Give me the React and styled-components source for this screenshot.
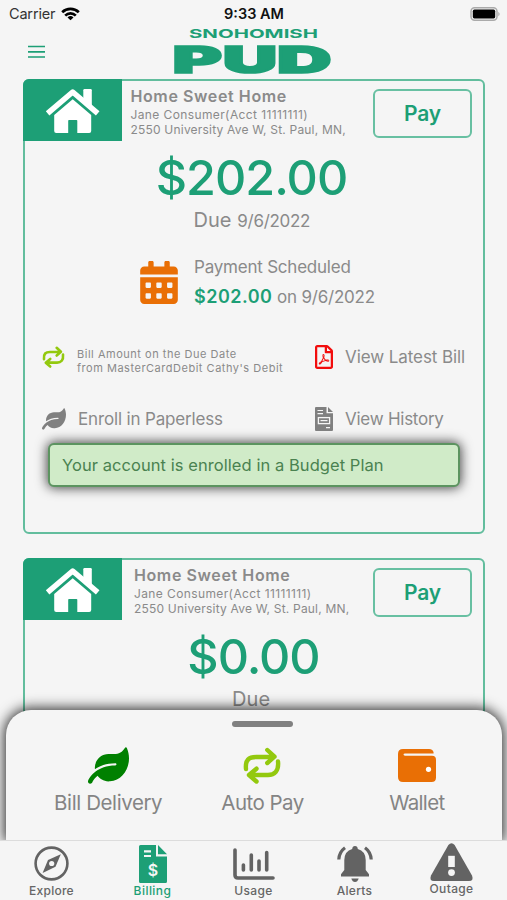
import React from 'react';
import styled, { createGlobalStyle } from 'styled-components';
import { FaCalendarAlt, FaLeaf, FaRegFilePdf } from 'react-icons/fa';

const green = '#1d9f76';
const line = '#62bd9d';
const gray = '#8a8a8a';
const bg = '#f5f5f5';

const GlobalStyle = createGlobalStyle`
  * { box-sizing: border-box; }
  body { margin: 0; background: ${bg}; font-family: Inter, "Liberation Sans", sans-serif; }
  button { font-family: inherit; }
  svg { display: block; flex: none; overflow: visible; }
`;

const Screen = styled.div`
  display: flex;
  flex-direction: column;
  width: 507px;
  height: 900px;
  overflow: hidden;
  background: ${bg};
`;

const Text = styled.span`
  display: block;
  white-space: pre;
  font-size: ${p => p.$size}px;
  font-weight: ${p => p.$weight || 400};
  letter-spacing: ${p => p.$track || 0}px;
  line-height: ${p => p.$line}px;
  color: ${p => p.$color || gray};
`;

const StatusBar = styled.div`
  display: grid;
  grid-template-columns: 1fr auto 1fr;
  align-items: center;
  height: 28px;
  padding: 0 8px 0 9px;
`;

const Carrier = styled.div`
  display: flex;
  align-items: center;
  gap: 6px;
`;

const BatterySlot = styled.div`
  display: flex;
  justify-content: flex-end;
  margin-right: -1px;
`;

const Header = styled.header`
  display: grid;
  grid-template-columns: 146px 157px 1fr;
  height: 51px;
  padding-left: 28px;
`;

const MenuButton = styled.button`
  padding: 17px 0 0;
  border: 0;
  background: none;
  display: flex;
  align-items: flex-start;
`;

const Content = styled.main`
  position: relative;
  height: 761px;
  overflow: hidden;
`;

const CardList = styled.div`
  display: flex;
  flex-direction: column;
  gap: 24px;
  padding: 0 22px 0 23px;
`;

const Card = styled.section`
  height: 455px;
  flex: none;
  border: 2px solid ${line};
  border-radius: 6px;
`;

const CardHead = styled.div`
  display: flex;
  height: 62px;
  margin: -2px -2px 0;
`;

const HouseTile = styled.div`
  width: 99px;
  padding: 10px 0 0 22px;
  background: ${green};
  border-radius: 6px 0 0 0;
`;

const Owner = styled.div`
  padding: 7px 0 0 ${p => p.$inset}px;
`;

const PayButton = styled.button`
  width: 99px;
  height: 49px;
  margin: 10px 13px 0 auto;
  padding: 0;
  display: flex;
  align-items: center;
  justify-content: center;
  background: none;
  border: 2px solid #68c0a2;
  border-radius: 6px;
`;

const Amount = styled.div`
  display: flex;
  justify-content: center;
  margin-top: 12px;
  padding-right: ${p => p.$shift || 0}px;
`;

const DueLine = styled.div`
  display: flex;
  justify-content: center;
  align-items: baseline;
  margin-top: 5px;
  height: 24px;
`;

const Scheduled = styled.div`
  display: flex;
  align-items: center;
  gap: 16px;
  height: 60px;
  margin: 20px 0 0 115px;
`;

const CalendarIcon = styled(FaCalendarAlt)`
  width: 38px;
  height: 43px;
  color: #e96f05;
`;

const PdfIcon = styled(FaRegFilePdf)`
  width: 18px;
  height: 24px;
  color: #f20d0d;
`;

const Inline = styled.div`
  display: flex;
  align-items: baseline;
`;

const Actions = styled.div`
  display: grid;
  grid-template-columns: 273px 1fr;
  grid-auto-rows: 34px;
  row-gap: 28px;
  margin: 28px 0 0 17px;
`;

const Action = styled.div`
  display: flex;
  align-items: center;
  gap: 12px;
`;

const TwoLines = styled.div`
  padding-top: 7px;
`;

const Banner = styled.div`
  display: flex;
  align-items: center;
  width: 412px;
  height: 44px;
  margin: 7px 0 0 23px;
  padding-left: 12px;
  background: #d0ebc8;
  border: 2px solid #5c9460;
  border-radius: 6px;
  box-shadow: 0 0 12px 1px rgba(0, 0, 0, 0.72);
`;

const Sheet = styled.div`
  position: absolute;
  left: 6px;
  right: 5px;
  bottom: 0;
  height: 130px;
  border-radius: 25px 25px 0 0;
  background: ${bg};
  box-shadow: 0 0 13px 2px rgba(0, 0, 0, 0.8);
`;

const Handle = styled.div`
  width: 61px;
  height: 6px;
  margin: 11px 0 0 226px;
  border-radius: 3px;
  background: #808080;
`;

const SheetItems = styled.div`
  display: grid;
  grid-template-columns: repeat(3, 1fr);
  padding: 16px 8px 0 25px;
`;

const SheetItem = styled.div`
  display: flex;
  flex-direction: column;
  align-items: center;
`;

const SheetIcon = styled.div`
  display: flex;
  align-items: center;
  justify-content: center;
  height: 45px;
`;

const TabBar = styled.nav`
  position: relative;
  display: grid;
  grid-template-columns: repeat(4, 101px) 93px;
  height: 60px;
  padding-left: 1px;
  border-top: 1px solid #dcdcdc;
  background: ${bg};
`;

const Tab = styled.div`
  display: flex;
  flex-direction: column;
  align-items: center;
`;

const TabIcon = styled.div`
  display: flex;
  align-items: flex-end;
  height: ${p => p.$height}px;
  margin-bottom: ${p => p.$gap}px;
`;

const Wifi = () => (
  <svg width="19" height="14" viewBox="0 0 19 14" fill="none" stroke="#000" strokeWidth="2.7">
    <path d="M1.2 5.2A12 12 0 0 1 17.8 5.2" />
    <path d="M4.2 8.6A7.6 7.6 0 0 1 14.8 8.6" />
    <path d="M9.5 13.3L6.5 10.4A4.3 4.3 0 0 1 12.5 10.4Z" fill="#000" stroke="none" />
  </svg>
);

const Battery = () => (
  <svg width="30" height="14" viewBox="0 0 30 14">
    <rect x="1" y="0.8" width="26" height="12.4" rx="3.6" fill="none" stroke="#aaa" strokeWidth="1.5" />
    <rect x="2.8" y="2.6" width="22.4" height="8.8" rx="1.6" />
    <path d="M28.3 4.7Q31 7 28.3 9.3Z" fill="#aaa" />
  </svg>
);

const Logo = () => (
  <svg width="157" height="48" viewBox="0 0 157 48" fill={green} fontFamily="Inter, sans-serif">
    <text x="15" y="10" fontSize="12.3" fontWeight="700" textLength="129" lengthAdjust="spacingAndGlyphs">SNOHOMISH</text>
    <g transform="translate(-1.5 45.2) scale(2.08 1)" fontSize="36.3" fontWeight="900" stroke={green} strokeWidth="1.7">
      <text x="0" y="0">P</text>
      <text x="24.2" y="0">U</text>
      <text x="50.2" y="0">D</text>
    </g>
  </svg>
);

const House = () => (
  <svg width="55" height="44" viewBox="0 0 55 44" fill="#fff">
    <path d="M38.3 1.2Q38.3 0 39.5 0H45.6Q46.8 0 46.8 1.2V18L38.3 11Z" />
    <path d="M2.6 24.3L27.7 3L52.7 24.3" fill="none" stroke="#fff" strokeWidth="5.5" strokeLinejoin="round" />
    <path d="M9.2 42V26L27.7 10.2L46.2 26V42Q46.2 44 44.2 44H32.3V31.8Q32.3 31 31.5 31H24Q23.2 31 23.2 31.8V44H11.2Q9.2 44 9.2 42Z" />
  </svg>
);

const Repeat = ({ width, height }) => (
  <svg width={width} height={height} viewBox="0 0 38 37" fill="none" stroke="#93c90e" strokeWidth="4.4" strokeLinecap="round" strokeLinejoin="round">
    <path d="M3 22C2 13 6 10 13 10H30M24.3 3L31.5 9.7L24.3 16" />
    <path d="M35 14.5C36 24 31.5 28 25 28H7M13.5 21.7L6 28L13.5 34.5" />
  </svg>
);

const HistoryFile = () => (
  <svg width="18" height="24" viewBox="0 0 18 24">
    <path d="M1 0H11.5V6.2H18V23Q18 24 17 24H1Q0 24 0 23V1Q0 0 1 0ZM13 0L18 5H13Z" fill="#808080" />
    <path d="M2.5 3.5H8M2.5 6.7H8M11 20.7H15" stroke={bg} strokeWidth="1.2" />
    <rect x="3.4" y="10.6" width="11.2" height="6" fill="#808080" stroke={bg} strokeWidth="1.3" />
    <path d="M5.5 13.6H12.5" stroke={bg} strokeWidth="1.2" />
  </svg>
);

const Wallet = () => (
  <svg width="38" height="33" viewBox="0 0 38 33">
    <path d="M5 0H31Q35 0 35.6 3.5V4.6H7Q5.5 4.6 5.5 5.6T7 6.8H34Q38 6.8 38 11V28.5Q38 33 33.5 33H5Q0 33 0 28V5Q0 0 5 0Z" fill="#e96f05" />
    <circle cx="30.5" cy="20.3" r="2.6" fill="#fff" />
  </svg>
);

const tabGray = '#636363';

const Compass = () => (
  <svg width="35" height="35" viewBox="0 0 35 35">
    <circle cx="17.5" cy="17.5" r="15.9" fill="none" stroke={tabGray} strokeWidth="2.6" />
    <path d="M26.8 8.2L21.5 20.8L8.6 27L14 14Z" fill={tabGray} />
    <circle cx="17.7" cy="17.5" r="2.6" fill={bg} />
  </svg>
);

const BillFile = () => (
  <svg width="28" height="38" viewBox="0 0 28 38">
    <path d="M1.5 0H17V11.5H28V36.5Q28 38 26.5 38H1.5Q0 38 0 36.5V1.5Q0 0 1.5 0ZM19 0L28 9.3H19Z" fill={green} />
    <path d="M5 6.3H12M5 11H12" stroke={bg} strokeWidth="2.2" />
    <text x="14" y="30.5" textAnchor="middle" fontSize="16" fontWeight="600" fill={bg} fontFamily="Inter, sans-serif">$</text>
  </svg>
);

const Chart = () => (
  <svg width="42" height="32" viewBox="0 0 42 32" fill="none" stroke={tabGray} strokeWidth="3.6" strokeLinecap="round">
    <path d="M2 2V27Q2 30 5 30H40" />
    <path d="M10.4 17V22M18.3 7V22M26 13V22M33.7 4.5V22" />
  </svg>
);

const Bell = () => (
  <svg width="36" height="36" viewBox="0 0 36 36" fill={tabGray}>
    <path d="M18 0Q20.6 0 20.8 3Q28.5 5 28.7 14V24L32 28.3V30.5H4V28.3L7.3 24V14Q7.5 5 15.2 3Q15.4 0 18 0Z" />
    <path d="M14.3 32.5H21.7Q20.5 36 18 36T14.3 32.5Z" />
    <path d="M8 1.8Q2.2 6 1.8 13.5M28 1.8Q33.8 6 34.2 13.5" fill="none" stroke={tabGray} strokeWidth="3.2" />
  </svg>
);

const Warning = () => (
  <svg width="43" height="38" viewBox="0 0 43 38">
    <path d="M18.4 2Q21.5 -1.6 24.6 2L42 32.5Q44 38 39 38H4Q-1 38 1 32.5Z" fill={tabGray} />
    <path d="M18.2 12.8H24.8V24H18.2Z" fill={bg} />
    <circle cx="21.5" cy="29.6" r="3.4" fill={bg} />
  </svg>
);

const AccountHead = ({ inset }) => (
  <CardHead>
    <HouseTile><House /></HouseTile>
    <Owner $inset={inset}>
      <Text $size={16} $weight={600} $track={0.6} $line={21}>Home Sweet Home</Text>
      <Text $size={12} $track={0.39} $line={15}>Jane Consumer(Acct 11111111)</Text>
      <Text $size={12} $track={0.2} $line={15}>2550 University Ave W, St. Paul, MN,</Text>
    </Owner>
    <PayButton><Text $size={21} $weight={600} $track={-0.1} $line={24} $color={green}>Pay</Text></PayButton>
  </CardHead>
);

const sheetItems = [
  { label: 'Bill Delivery', track: -0.4, icon: <FaLeaf size={41} color="#008000" /> },
  { label: 'Auto Pay', track: -0.55, icon: <Repeat width={38} height={37} /> },
  { label: 'Wallet', track: -0.65, icon: <Wallet /> },
];

const tabs = [
  { label: 'Explore', icon: <Compass />, height: 40, gap: 2, track: 0.25 },
  { label: 'Billing', icon: <BillFile />, height: 42, gap: 0, track: 0.45, color: green },
  { label: 'Usage', icon: <Chart />, height: 39, gap: 3, track: 0.35 },
  { label: 'Alerts', icon: <Bell />, height: 41, gap: 1, track: 0.3 },
  { label: 'Outage', icon: <Warning />, height: 40, gap: 0, track: 0.35 },
];

export default function App() {
  return (
    <Screen>
      <GlobalStyle />
      <StatusBar>
        <Carrier>
          <Text $size={14.5} $track={-0.18} $line={28} $color="#333">Carrier</Text>
          <Wifi />
        </Carrier>
        <Text $size={14.5} $weight={600} $line={28} $color="#111">9:33 AM</Text>
        <BatterySlot><Battery /></BatterySlot>
      </StatusBar>
      <Header>
        <MenuButton aria-label="Menu">
          <svg width="17" height="14" viewBox="0 0 17 14" stroke={green} strokeWidth="1.7">
            <path d="M0 1.5H17M0 6.8H17M0 12H17" />
          </svg>
        </MenuButton>
        <Logo />
      </Header>
      <Content>
        <CardList>
          <Card>
            <AccountHead inset={8.5} />
            <Amount $shift={5}><Text $size={48.5} $weight={550} $track={-1} $line={50} $color={green}>$202.00</Text></Amount>
            <DueLine>
              <Text $size={20} $track={0.1} $line={24}>Due </Text>
              <Text $size={17} $track={-0.3} $line={24}>9/6/2022 </Text>
            </DueLine>
            <Scheduled>
              <CalendarIcon />
              <div>
                <Text $size={17} $track={-0.22} $line={30}>Payment Scheduled</Text>
                <Inline>
                  <Text $size={18} $weight={600} $track={0.5} $line={30} $color={green}>$202.00</Text>
                  <Text $size={17} $track={-0.22} $line={30}> on 9/6/2022</Text>
                </Inline>
              </div>
            </Scheduled>
            <Actions>
              <Action>
                <Repeat width={23} height={22} />
                <TwoLines>
                  <Text $size={11} $track={0.52} $line={14}>Bill Amount on the Due Date</Text>
                  <Text $size={11} $track={0.52} $line={14}>from MasterCardDebit Cathy's Debit</Text>
                </TwoLines>
              </Action>
              <Action>
                <PdfIcon />
                <Text $size={17} $track={-0.08} $line={34}>View Latest Bill</Text>
              </Action>
              <Action>
                <FaLeaf size={24} color="#808080" />
                <Text $size={17} $track={-0.16} $line={34}>Enroll in Paperless</Text>
              </Action>
              <Action>
                <HistoryFile />
                <Text $size={17} $track={-0.25} $line={32}>View History</Text>
              </Action>
            </Actions>
            <Banner><Text $size={16.5} $track={0.06} $line={24} $color="#4a8250">Your account is enrolled in a Budget Plan</Text></Banner>
          </Card>
          <Card>
            <AccountHead inset={12} />
            <Amount $shift={1}><Text $size={48.5} $weight={550} $track={-1} $line={50} $color={green}>$0.00</Text></Amount>
            <DueLine><Text $size={20} $track={0.1} $line={24}>Due </Text></DueLine>
          </Card>
        </CardList>
        <Sheet>
          <Handle />
          <SheetItems>
            {sheetItems.map(item => (
              <SheetItem key={item.label}>
                <SheetIcon>{item.icon}</SheetIcon>
                <Text $size={20.5} $track={item.track} $line={30} $color="#848484">{item.label}</Text>
              </SheetItem>
            ))}
          </SheetItems>
        </Sheet>
      </Content>
      <TabBar>
        {tabs.map(tab => (
          <Tab key={tab.label}>
            <TabIcon $height={tab.height} $gap={tab.gap}>{tab.icon}</TabIcon>
            <Text $size={12} $weight={500} $track={tab.track} $line={16} $color={tab.color || '#666'}>{tab.label}</Text>
          </Tab>
        ))}
      </TabBar>
    </Screen>
  );
}
